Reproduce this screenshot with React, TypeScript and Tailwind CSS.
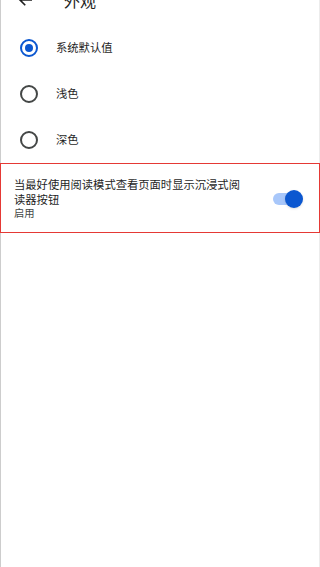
import React, { useState } from 'react';

const options = ['系统默认值', '浅色', '深色'];

const Radio: React.FC<{ checked: boolean }> = ({ checked }) => (
  <span
    className={`flex items-center justify-center w-[18px] h-[18px] rounded-full border-2 ${
      checked ? 'border-[#0b57d0]' : 'border-[#444746]'
    }`}
  >
    {checked && <span className="w-[8px] h-[8px] rounded-full bg-[#0b57d0]" />}
  </span>
);

export default function App() {
  const [theme, setTheme] = useState(0);
  const [enabled, setEnabled] = useState(true);

  return (
    <div
      className="h-screen flex flex-col bg-white border-l border-l-[#cdcdcd] border-r border-r-[#ececec] text-[#1f1f1f]"
      style={{ fontFamily: '"Noto Sans CJK SC", Roboto, "Noto Sans", sans-serif' }}
    >
      {/* Header (scrolled partly out of view) */}
      <header className="-mt-[24px] h-[48px] shrink-0 flex items-center">
        <button className="ml-[16px] w-[18px] h-[18px] flex items-center justify-center text-[#1f1f1f]">
          <svg viewBox="0 0 24 24" className="w-[18px] h-[18px]" fill="none" stroke="currentColor" strokeWidth="2.2">
            <path d="M20 12H4M11 5l-7 7 7 7" />
          </svg>
        </button>
        <h1 className="ml-[29px] text-[16px] leading-none">外观</h1>
      </header>

      {/* Theme options */}
      <div className="flex flex-col">
        {options.map((label, i) => (
          <button
            key={label}
            onClick={() => setTheme(i)}
            className={`w-full flex items-center pl-[19px] ${i === 0 ? 'h-[47px]' : 'h-[46px]'}`}
          >
            <Radio checked={theme === i} />
            <span className="ml-[18px] text-[11.3px] leading-none text-[#1f1f1f]">{label}</span>
          </button>
        ))}
      </div>

      {/* Reader mode toggle row */}
      <div
        className="-mx-px border-[1.5px] border-[#e53935] flex items-center pl-[13px] pr-[16px] pt-[13px] pb-[11px] cursor-pointer"
        onClick={() => setEnabled(!enabled)}
      >
        <div className="w-[236px]">
          <div className="text-[11.3px] leading-[14.5px] text-[#1f1f1f]">
            当最好使用阅读模式查看页面时显示沉浸式阅读器按钮
          </div>
          <div className="text-[10.3px] leading-[14.5px] text-[#444746]">{enabled ? '启用' : '停用'}</div>
        </div>
        <div className="ml-auto relative w-[30px] h-[18px]">
          <span
            className={`absolute left-0 top-[3px] w-[26px] h-[12px] rounded-full ${
              enabled ? 'bg-[#a8c7fa]' : 'bg-[#c4c7c5]'
            }`}
          />
          <span
            className={`absolute top-0 w-[18px] h-[18px] rounded-full shadow-sm ${
              enabled ? 'right-0 bg-[#0b57d0]' : 'left-0 bg-[#f1f1f1]'
            }`}
          />
        </div>
      </div>
    </div>
  );
}
